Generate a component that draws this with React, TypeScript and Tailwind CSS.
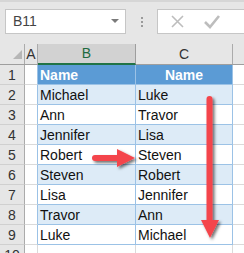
import React from "react";

const rows: [string, string][] = [
  ["Name", "Name"],
  ["Michael", "Luke"],
  ["Ann", "Travor"],
  ["Jennifer", "Lisa"],
  ["Robert", "Steven"],
  ["Steven", "Robert"],
  ["Lisa", "Jennifer"],
  ["Travor", "Ann"],
  ["Luke", "Michael"],
];

export default function App() {
  return (
    <div
      className="relative w-[244px] h-[253px] overflow-hidden bg-[#e6e6e6] text-[#222]"
      style={{ fontFamily: '"Liberation Sans", Arial, sans-serif' }}
    >
      {/* formula bar */}
      <div className="h-[2px] bg-[#d6d6d6]" />
      <div className="flex items-start h-[42px] pt-[7px]">
        <div className="ml-[5px] w-[122px] h-[25px] bg-white border border-[#c6c6c6] flex items-center pl-[7px] pr-[6px]">
          <span className="text-[14px] text-[#444] flex-1">B11</span>
          <svg width="8" height="5" viewBox="0 0 8 5">
            <path d="M0 0 L8 0 L4 4 Z" fill="#7a7a7a" />
          </svg>
        </div>
        <div className="w-[31px] h-[25px] flex flex-col items-center justify-center gap-[2px]">
          <div className="w-[2px] h-[2px] bg-[#9a9a9a]" />
          <div className="w-[2px] h-[2px] bg-[#9a9a9a]" />
          <div className="w-[2px] h-[2px] bg-[#9a9a9a]" />
        </div>
        <div className="flex-1 h-[25px] bg-white border border-[#c6c6c6] border-r-0 flex items-center">
          <svg width="86" height="23" viewBox="0 0 86 23">
            <path d="M14 6 L25 17 M25 6 L14 17" stroke="#bdbdbd" strokeWidth="1.6" />
            <path d="M47 12 L52 17 L61 6" stroke="#bdbdbd" strokeWidth="2.6" fill="none" />
          </svg>
        </div>
      </div>

      {/* column headers */}
      <div className="flex h-[21px] border-b border-[#9e9e9e]">
        <div className="w-[25px] border-r border-[#ababab] relative">
          <svg className="absolute right-[2px] bottom-[5px]" width="9" height="9" viewBox="0 0 9 9">
            <path d="M9 0 L9 9 L0 9 Z" fill="#b6b6b6" />
          </svg>
        </div>
        <div className="w-[13px] border-r border-[#ababab] flex items-center justify-center text-[14px] text-[#333]">
          A
        </div>
        <div className="w-[98px] bg-[#d2d2d2] border-r border-[#9e9e9e] flex items-center justify-center text-[14px] text-[#1e6b40] border-b-2 border-b-[#217346] -mb-[1px]">
          B
        </div>
        <div className="w-[97px] border-r border-[#ababab] flex items-center justify-center text-[14px] text-[#333]">
          C
        </div>
        <div className="flex-1" />
      </div>

      {/* rows */}
      {rows.map(([b, c], i) => {
        const header = i === 0;
        const band = !header && i % 2 === 1;
        const bg = header ? "bg-[#5b9bd5]" : band ? "bg-[#ddebf7]" : "bg-white";
        return (
          <div key={i} className="flex h-[20px]">
            <div className="w-[25px] border-r border-[#ababab] border-b border-b-[#d0d0d0] flex items-center justify-center pt-[1px] text-[14px] text-[#333]">
              {i + 1}
            </div>
            <div className="w-[13px] bg-white border-r border-[#9bc2e6] border-b border-b-[#dadada]" />
            <div
              className={`w-[98px] ${bg} border-r border-[#9bc2e6] border-b border-b-[#9bc2e6] flex items-center pl-[2px] pt-[1px] text-[14px] ${
                header ? "font-bold text-white" : "text-[#111]"
              }`}
            >
              {b}
            </div>
            <div
              className={`w-[97px] ${bg} border-r border-[#9bc2e6] border-b border-b-[#9bc2e6] flex items-center pt-[1px] text-[14px] ${
                header ? "font-bold text-white justify-center" : "pl-[2px] text-[#111]"
              }`}
            >
              {c}
            </div>
            <div className="flex-1 bg-white border-b border-[#dadada]" />
          </div>
        );
      })}
      <div className="flex h-[20px]">
        <div className="w-[25px] border-r border-[#ababab] flex items-center justify-center pt-[1px] text-[14px] text-[#333]">
          10
        </div>
        <div className="w-[13px] bg-white border-r border-[#dadada]" />
        <div className="w-[98px] bg-white border-r border-[#dadada]" />
        <div className="w-[97px] bg-white border-r border-[#dadada]" />
        <div className="flex-1 bg-white" />
      </div>

      {/* arrows */}
      <svg className="absolute left-0 top-0 pointer-events-none" width="244" height="253" viewBox="0 0 244 253">
        <defs>
          <filter id="sh" x="-50%" y="-50%" width="200%" height="200%">
            <feDropShadow dx="2" dy="2" stdDeviation="1.8" floodColor="#000" floodOpacity="0.55" />
          </filter>
        </defs>
        <g filter="url(#sh)" fill="#f4454b">
          <path d="M206.5 99 a3 3 0 0 1 6 0 L212.5 221 L206.5 221 Z" />
          <path d="M201 220 L219 220 L210 238 Z" />
          <path d="M95 155 L118 155 L118 161 L95 161 a3 3 0 0 1 0 -6 Z" />
          <path d="M117 149 L135 158 L117 167 Z" />
        </g>
      </svg>
    </div>
  );
}
